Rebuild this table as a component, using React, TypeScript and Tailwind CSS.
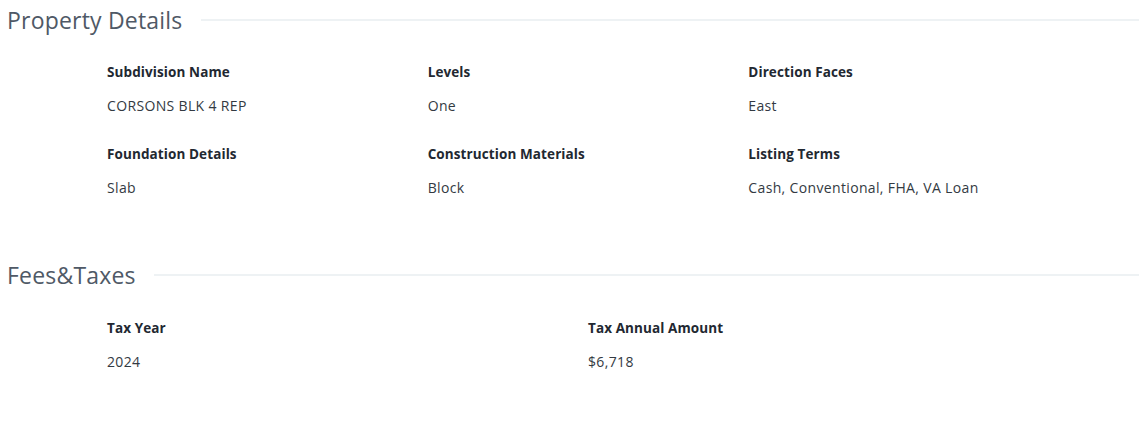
const propertyDetails = [
  { label: "Subdivision Name", value: "CORSONS BLK 4 REP" },
  { label: "Levels", value: "One" },
  { label: "Direction Faces", value: "East" },
  { label: "Foundation Details", value: "Slab" },
  { label: "Construction Materials", value: "Block" },
  { label: "Listing Terms", value: "Cash, Conventional, FHA, VA Loan" },
]

const feesTaxes = [
  { label: "Tax Year", value: "2024" },
  { label: "Tax Annual Amount", value: "$6,718" },
]

function SectionTitle({ title }: { title: string }) {
  return (
    <div className="flex items-center gap-[18px] pl-[7px] pr-[6px]">
      <h2 className="text-[23px] leading-[40px] tracking-[0.2px] text-[#4f5966] whitespace-nowrap">{title}</h2>
      <div className="flex-1 h-[2px] bg-[#eef2f4]" />
    </div>
  )
}

function Field({ label, value }: { label: string; value: string }) {
  return (
    <div className="flex flex-col">
      <div className="text-[13.5px] font-bold leading-[20px] tracking-[0.1px] text-[#222831]">{label}</div>
      <div className="mt-[14px] text-[14px] leading-[20px] tracking-[0.35px] text-[#333a42]">{value}</div>
    </div>
  )
}

export default function App() {
  return (
    <div className="w-[1145px] h-[431px] bg-white font-['Open_Sans','Liberation_Sans',sans-serif]">
      <section>
        <SectionTitle title="Property Details" />
        <div className="pl-[107px] w-[1069px] pt-[22px] grid grid-cols-3 gap-y-[28px]">
          {propertyDetails.map((f) => (
            <Field key={f.label} label={f.label} value={f.value} />
          ))}
        </div>
      </section>
      <section className="mt-[57px]">
        <SectionTitle title="Fees&Taxes" />
        <div className="pl-[107px] w-[1069px] pt-[23px] grid grid-cols-2">
          {feesTaxes.map((f) => (
            <Field key={f.label} label={f.label} value={f.value} />
          ))}
        </div>
      </section>
    </div>
  )
}
